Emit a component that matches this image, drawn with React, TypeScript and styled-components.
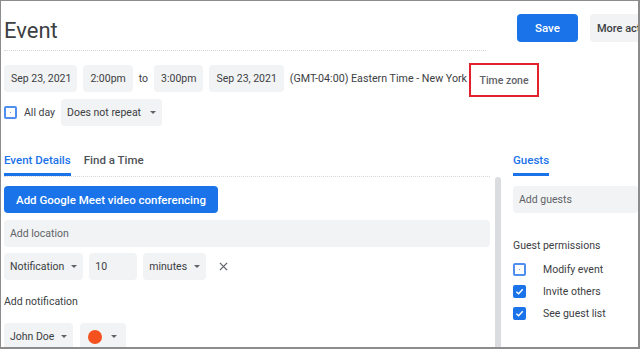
import React from "react";
import styled, { createGlobalStyle } from "styled-components";

const Global = createGlobalStyle`
  html, body { margin: 0; padding: 0; background: #fff; }
  body { font-family: Roboto, "Liberation Sans", Arial, sans-serif; color: #3c4043; }
  * { box-sizing: border-box; }
`;

const Frame = styled.div`
  width: 640px;
  height: 349px;
  border: 1px solid #8c8c8c;
  border-right-width: 2px;
  border-bottom-width: 2px;
  overflow: hidden;
  background: #fff;
  padding-left: 3px;
  display: flex;
  flex-direction: column;
`;

const Header = styled.header`
  display: flex;
  align-items: flex-start;
  height: 50px;
  flex-shrink: 0;
`;

const TitleBox = styled.div`
  width: 482px;
  height: 50px;
  flex-shrink: 0;
  border-bottom: 1px dotted #d5d7da;
  padding-top: 17px;
`;

const Title = styled.h1`
  margin: 0;
  font-size: 22px;
  line-height: 26px;
  font-weight: 400;
  color: #3c4043;
`;

const PrimaryButton = styled.button<{ $ml?: number }>`
  flex-shrink: 0;
  height: 28px;
  margin-top: 13px;
  margin-left: ${(p) => p.$ml ?? 0}px;
  padding: 0 18px;
  border: none;
  border-radius: 4px;
  background: #1a73e8;
  color: #fff;
  font-family: inherit;
  font-size: 11.5px;
  font-weight: 500;
  white-space: nowrap;
`;

const GhostButton = styled.button`
  flex-shrink: 0;
  height: 28px;
  margin-top: 13px;
  margin-left: 12px;
  padding: 0 7px;
  border: none;
  border-radius: 4px;
  background: #f1f3f4;
  color: #3c4043;
  font-family: inherit;
  font-size: 11px;
  font-weight: 500;
  white-space: nowrap;
`;

const Row = styled.div<{ $mt: number; $gap?: number }>`
  display: flex;
  align-items: center;
  height: 27px;
  flex-shrink: 0;
  margin-top: ${(p) => p.$mt}px;
  gap: ${(p) => p.$gap ?? 6}px;
  white-space: nowrap;
`;

const Chip = styled.div<{ $w?: number; $gap?: number; $pad?: string }>`
  display: flex;
  align-items: center;
  gap: ${(p) => p.$gap ?? 7}px;
  height: 27px;
  padding: ${(p) => p.$pad ?? "0 6px"};
  ${(p) => (p.$w ? `width: ${p.$w}px;` : "")}
  border-radius: 4px;
  background: #f1f3f4;
  font-size: 10.5px;
  color: #3c4043;
  flex-shrink: 0;
`;

const Caret = styled.span`
  width: 0;
  height: 0;
  border-left: 3px solid transparent;
  border-right: 3px solid transparent;
  border-top: 3px solid #5f6368;
`;

const Plain = styled.span<{ $size?: number; $ml?: number }>`
  font-size: ${(p) => p.$size ?? 10.5}px;
  margin-left: ${(p) => p.$ml ?? 0}px;
  color: #3c4043;
`;

const TimeZone = styled.div`
  display: flex;
  align-items: center;
  justify-content: center;
  width: 70px;
  height: 34px;
  margin-left: -4px;
  margin-top: 3px;
  border: 2px solid #e3202b;
  font-size: 10.5px;
  font-weight: 500;
  color: #5f6368;
  flex-shrink: 0;
`;

const Box = styled.span<{ $checked?: boolean }>`
  display: inline-flex;
  align-items: center;
  justify-content: center;
  width: 13px;
  height: 13px;
  border-radius: 2px;
  flex-shrink: 0;
  border: 2px solid ${(p) => (p.$checked ? "#1a73e8" : "#4f8ff0")};
  background: ${(p) => (p.$checked ? "#1a73e8" : "#fff")};
`;

const FocusDot = styled.span`
  width: 1.5px;
  height: 1.5px;
  background: #6f9be0;
`;

const Main = styled.div`
  display: flex;
  flex: 1;
  min-height: 0;
`;

const LeftCol = styled.section`
  width: 486px;
  flex-shrink: 0;
  display: flex;
  flex-direction: column;
`;

const Gutter = styled.div`
  width: 23px;
  flex-shrink: 0;
  padding-left: 5px;
  padding-top: 51px;
`;

const Thumb = styled.div`
  width: 6px;
  height: 200px;
  border-radius: 3px;
  background: #dadce0;
`;

const RightCol = styled.section`
  flex: 1;
  min-width: 0;
  display: flex;
  flex-direction: column;
`;

const TabBar = styled.div<{ $line?: boolean }>`
  display: flex;
  align-items: flex-end;
  gap: 13px;
  height: 51px;
  flex-shrink: 0;
  border-bottom: 1px dotted ${(p) => (p.$line ? "#d5d7da" : "transparent")};
`;

const Tab = styled.div<{ $active?: boolean }>`
  font-size: 11.5px;
  line-height: 14px;
  font-weight: 500;
  padding-bottom: 6px;
  border-bottom: 3px solid ${(p) => (p.$active ? "#1a73e8" : "transparent")};
  color: ${(p) => (p.$active ? "#1a73e8" : "#4d5156")};
  white-space: nowrap;
`;

const MeetButton = styled(PrimaryButton)`
  align-self: flex-start;
  margin-top: 9px;
  height: 27px;
  padding: 0 12px;
`;

const Input = styled.div<{ $mt: number }>`
  display: flex;
  align-items: center;
  height: 27px;
  flex-shrink: 0;
  margin-top: ${(p) => p.$mt}px;
  padding: 0 6px;
  border-radius: 4px;
  background: #f1f3f4;
  font-size: 10.5px;
  color: #5f6368;
  white-space: nowrap;
`;

const CloseIcon = styled.svg`
  width: 9px;
  height: 9px;
  margin-left: 7px;
`;

const Label = styled.div<{ $mt: number }>`
  margin-top: ${(p) => p.$mt}px;
  font-size: 10.5px;
  line-height: 14px;
  color: #3c4043;
  white-space: nowrap;
`;

const Dot = styled.span<{ $c: string }>`
  width: 14px;
  height: 14px;
  border-radius: 50%;
  background: ${(p) => p.$c};
`;

const PermList = styled.div`
  display: flex;
  flex-direction: column;
  gap: 9px;
  margin-top: 10px;
`;

const PermRow = styled.label`
  display: flex;
  align-items: center;
  gap: 17px;
  height: 13px;
  font-size: 10.5px;
  color: #3c4043;
  white-space: nowrap;
`;

const Check = () => (
  <svg width="9" height="9" viewBox="0 0 10 10">
    <path d="M1.5 5.2 L4 7.6 L8.6 2.6" fill="none" stroke="#fff" strokeWidth="1.6" />
  </svg>
);

const CheckBox = ({ checked }: { checked?: boolean }) => (
  <Box $checked={checked}>{checked ? <Check /> : <FocusDot />}</Box>
);

export default function App() {
  return (
    <>
      <Global />
      <Frame>
        <Header>
          <TitleBox>
            <Title>Event</Title>
          </TitleBox>
          <PrimaryButton $ml={31}>Save</PrimaryButton>
          <GhostButton>More actions</GhostButton>
        </Header>

        <Row $mt={14}>
          <Chip $pad="0 6px 0 7px">Sep 23, 2021</Chip>
          <Chip $pad="0 7px">2:00pm</Chip>
          <Plain>to</Plain>
          <Chip $pad="0 7px">3:00pm</Chip>
          <Chip $pad="0 7px">Sep 23, 2021</Chip>
          <Plain $size={10.7}>(GMT-04:00) Eastern Time - New York</Plain>
          <TimeZone>Time zone</TimeZone>
        </Row>

        <Row $mt={7}>
          <CheckBox />
          <Plain $ml={1}>All day</Plain>
          <Chip $gap={9}>
            Does not repeat <Caret />
          </Chip>
        </Row>

        <Main>
          <LeftCol>
            <TabBar $line>
              <Tab $active>Event Details</Tab>
              <Tab>Find a Time</Tab>
            </TabBar>
            <MeetButton>Add Google Meet video conferencing</MeetButton>
            <Input $mt={7}>Add location</Input>
            <Row $mt={6} $gap={6}>
              <Chip>
                Notification <Caret />
              </Chip>
              <Chip $w={48}>10</Chip>
              <Chip>
                minutes <Caret />
              </Chip>
              <CloseIcon viewBox="0 0 10 10">
                <path d="M1 1 L9 9 M9 1 L1 9" stroke="#5f6368" strokeWidth="1.4" />
              </CloseIcon>
            </Row>
            <Label $mt={15}>Add notification</Label>
            <Row $mt={14} $gap={7}>
              <Chip>
                John Doe <Caret />
              </Chip>
              <Chip $gap={9} $pad="0 9px 0 8px">
                <Dot $c="#f4511e" /> <Caret />
              </Chip>
            </Row>
          </LeftCol>
          <Gutter>
            <Thumb />
          </Gutter>
          <RightCol>
            <TabBar>
              <Tab $active>Guests</Tab>
            </TabBar>
            <Input $mt={9}>Add guests</Input>
            <Label $mt={26}>Guest permissions</Label>
            <PermList>
              <PermRow>
                <CheckBox /> Modify event
              </PermRow>
              <PermRow>
                <CheckBox checked /> Invite others
              </PermRow>
              <PermRow>
                <CheckBox checked /> See guest list
              </PermRow>
            </PermList>
          </RightCol>
        </Main>
      </Frame>
    </>
  );
}
